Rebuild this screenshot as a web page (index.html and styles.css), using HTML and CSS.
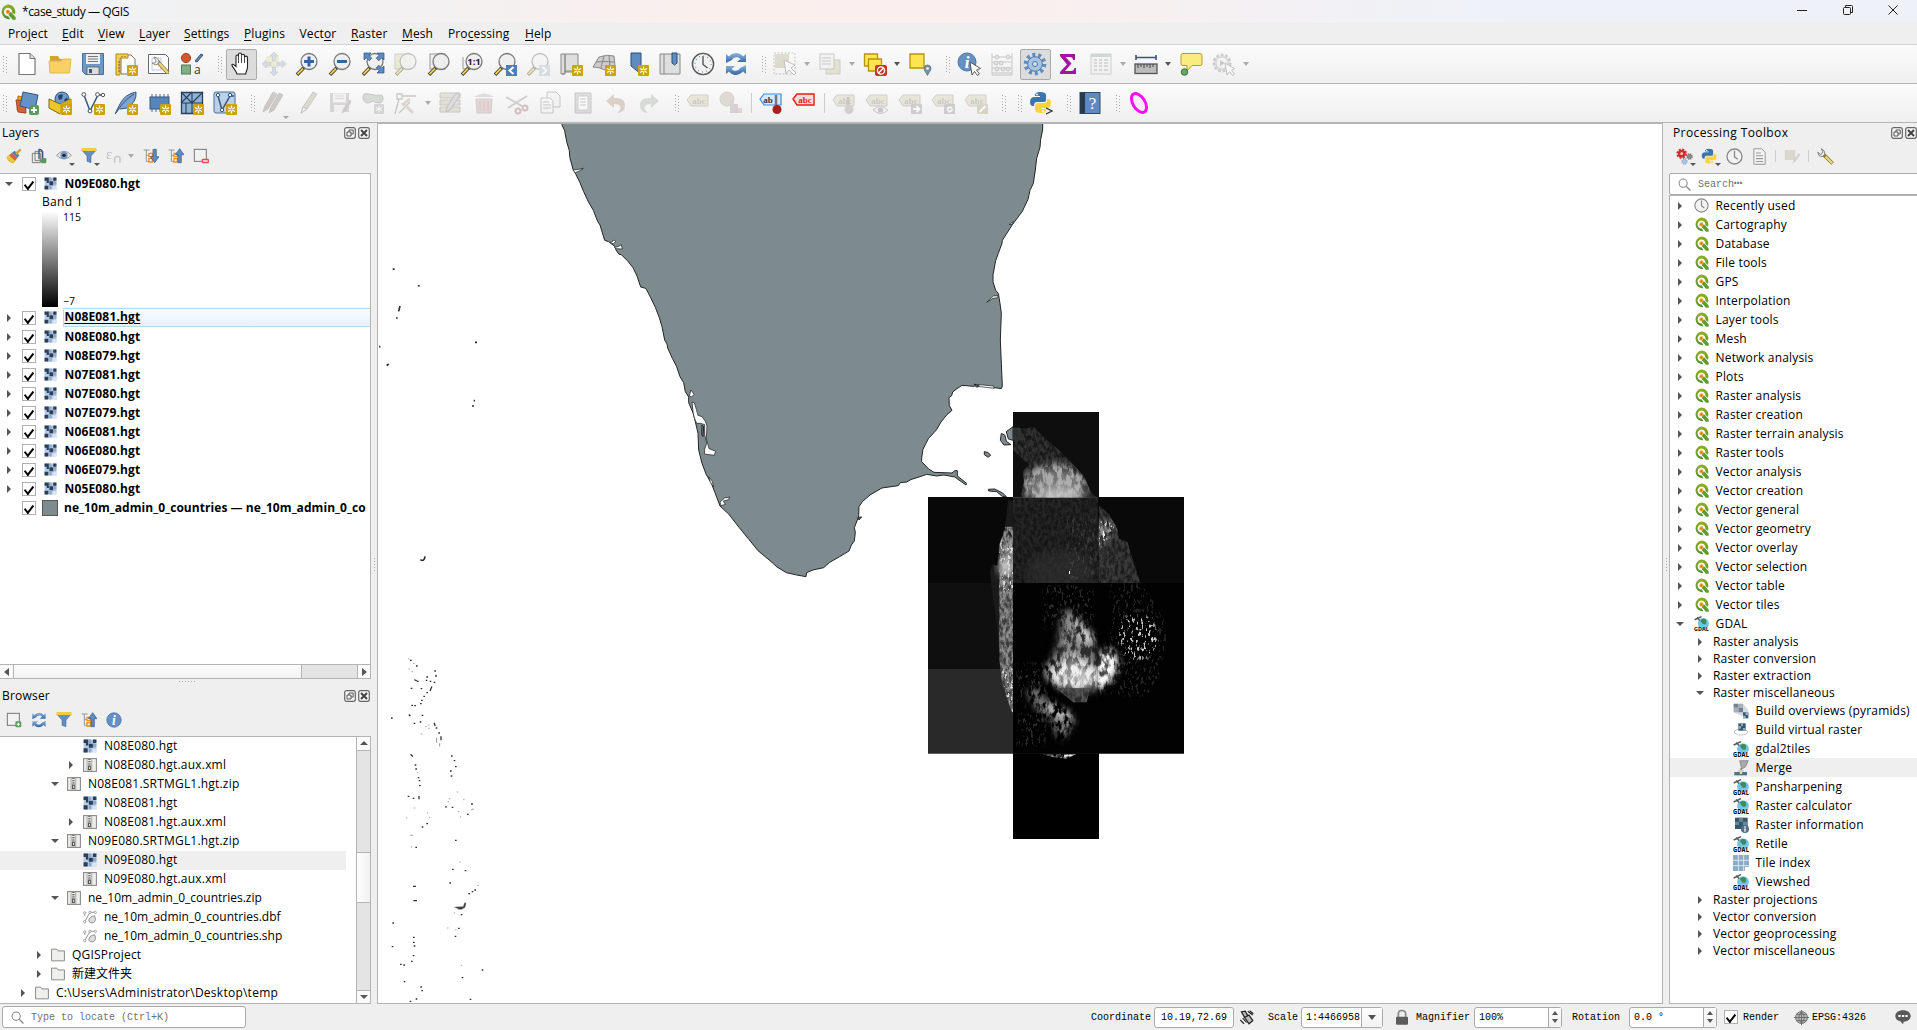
FILE: index.html
```
<!DOCTYPE html>
<html lang="en">
<head>
<meta charset="utf-8">
<title>*case_study — QGIS</title>
<link rel="stylesheet" href="styles.css">
</head>
<body>
<svg class="defs" aria-hidden="true">
<defs>
<linearGradient id="gq" x1="0" y1="0" x2="0" y2="1"><stop offset="0" stop-color="#93b023"/><stop offset="1" stop-color="#4f8f2c"/></linearGradient>
<linearGradient id="gb" x1="0" y1="0" x2="0" y2="1"><stop offset="0" stop-color="#8fb4dc"/><stop offset="1" stop-color="#33659f"/></linearGradient>
<symbol id="star" viewBox="0 0 24 24"><rect x="13" y="13" width="11" height="11" rx="1" fill="#c9a20c"/><path d="M18.500 14.500v8M15 16.500l7 4M22 16.500l-7 4" stroke="#fff" stroke-width="1.300"/><circle cx="18.500" cy="18.500" r="1.100" fill="#c9a20c"/></symbol>
<symbol id="plus" viewBox="0 0 24 24"><rect x="14" y="14" width="10" height="10" rx="2" fill="#5a9a5a"/><path d="M19 16v6M16 19h6" stroke="#fff" stroke-width="1.800"/></symbol>
<symbol id="mag" viewBox="0 0 24 24"><path d="M9 15.500L2 22.800" stroke="#333" stroke-width="3.400"/><path d="M8 16.500L2.500 22.200" stroke="#f3cf4d" stroke-width="1.900"/><circle cx="14" cy="9.500" r="8" fill="#eee" fill-opacity=".88" stroke="#777" stroke-width="1.300"/></symbol>
<symbol id="qgis" viewBox="0 0 24 24"><path d="M12 .8A11 11 0 1 0 15 22.600L12.500 18.300A6.300 6.300 0 1 1 18.300 12.700L22.300 15.500A11 11 0 0 0 12 .8Z" fill="url(#gq)"/><path d="M13 12.500h4l6.500 7.500v3.500H19l-6-7z" fill="#5f9d30"/><circle cx="11.800" cy="11.800" r="3.300" fill="#f2a33a"/><circle cx="11.800" cy="11.800" r="1.600" fill="#e8632b"/></symbol>
<symbol id="new" viewBox="0 0 24 24"><path d="M4 1.500h11l5 5v16H4z" fill="#fff" stroke="#777" stroke-width="1.200"/><path d="M15 1.500v5h5" fill="#ddd" stroke="#777"/></symbol>
<symbol id="open" viewBox="0 0 24 24"><path d="M2 4h8l2 3h10v4H2z" fill="#d3a62c"/><path d="M1 9h12l2-2h8l-1.500 14H2z" fill="#f8d064" stroke="#dcb03a" stroke-width=".8"/></symbol>
<symbol id="save" viewBox="0 0 24 24"><path d="M1.500 1.500h21v21h-18l-3-3z" fill="#6d97c4" stroke="#4a6f9b"/><rect x="5" y="2" width="14" height="10" fill="#eee"/><path d="M7 4.500h10M7 7h10M7 9.500h10" stroke="#777"/><path d="M6 15h12v7.500H6z" fill="#ddd" stroke="#555" stroke-width=".7"/><path d="M8 17h3v4H8z" fill="#37587e"/></symbol>
<symbol id="layout" viewBox="0 0 24 24"><path d="M7 3h10l4 4v15H7z" fill="#fff" stroke="#777"/><path d="M2 2h12v4H6v17H2z" fill="#f5cf4f" stroke="#ab8a19"/><path d="M4 10h2M4 13h2M4 16h2M4 19h2M8 4v1M11 4v1" stroke="#806400"/><use href="#star"/></symbol>
<symbol id="layman" viewBox="0 0 24 24"><path d="M1.500 2.500h17l3 3v16h-20z" fill="#fff" stroke="#666"/><path d="M5 6h9v12H5z" fill="none" stroke="#9ab3dd" stroke-width=".7"/><path d="M10 9l11 12" stroke="#8b7523" stroke-width="4"/><path d="M12 11l9 10" stroke="#efd980" stroke-width="2.400"/><path d="M7 5l3 1 2 3-1 3-3 1-3-2 3 0 1-2z" fill="#eee" stroke="#777" stroke-width=".8"/></symbol>
<symbol id="style" viewBox="0 0 24 24"><circle cx="6" cy="6" r="4.600" fill="#cd5834" stroke="#a3401f"/><path d="M15 9l6-7 2 1-6 7z" fill="#5c86b5" stroke="#34567f"/><rect x="1.500" y="13" width="9" height="9" fill="#83ad83" stroke="#527f52"/><text x="14" y="22" font-family="Open Sans" font-size="12" fill="#333">a</text></symbol>
<symbol id="hand" viewBox="0 0 24 24"><path d="M8 22C7 18 2 14 3 12.500c1.500-1 3 1 4 2V4.500c0-2 2.500-2 2.500 0V2.500c0-2 3-2 3 0v1.200c0-2 3-2 3 0v1.800c0-1.800 3-1.800 3 0V15c0 3-1.500 4-1.800 7z" fill="#fff" stroke="#222" stroke-width="1.100"/><path d="M9.500 4v7M12.500 4v7M15.500 5v6" stroke="#333" stroke-width=".9"/></symbol>
<symbol id="pansel" viewBox="0 0 24 24"><rect x="4" y="4" width="13" height="12" fill="#e4dc9f"/><path d="M12 0l4 4h-2.500v5H10.500V4H8zM12 24l4-4h-2.500v-5h-3v5H8zM0 12l4-4v2.500h5v3H4V16zM24 12l-4-4v2.500h-5v3h5V16z" fill="#aebccb" stroke="#8393a8" stroke-width=".7"/></symbol>
<symbol id="zin" viewBox="0 0 24 24"><use href="#mag"/><path d="M14 4.500v10M9 9.500h10" stroke="#33659f" stroke-width="3"/></symbol>
<symbol id="zout" viewBox="0 0 24 24"><use href="#mag"/><path d="M9 9.500h10" stroke="#33659f" stroke-width="3"/></symbol>
<symbol id="zfull" viewBox="0 0 24 24"><use href="#mag"/><path d="M3 1h7L7.800 3.200l3 3-2.600 2.600-3-3L3 8zM23 1h-7l2.200 2.200-3 3 2.600 2.600 3-3L23 8zM23 21h-7l2.200-2.200-3-3 2.600-2.600 3 3L23 14z" fill="#5d8dc0" stroke="#2b5077" stroke-width=".7"/></symbol>
<symbol id="zsel" viewBox="0 0 24 24"><rect x="1" y="2" width="15" height="15" fill="#ddd9a4" stroke="#999"/><use href="#mag"/></symbol>
<symbol id="zlay" viewBox="0 0 24 24"><rect x="3" y="2" width="15" height="15" fill="#eee" stroke="#999"/><use href="#mag"/></symbol>
<symbol id="znat" viewBox="0 0 24 24"><path d="M3 5v12h8" fill="none" stroke="#999"/><use href="#mag"/><text x="14" y="13.200" text-anchor="middle" font-family="Open Sans" font-weight="700" font-size="9.500" fill="#222">1:1</text></symbol>
<symbol id="zlast" viewBox="0 0 24 24"><use href="#mag"/><rect x="13" y="13" width="11" height="11" fill="#4d7eb4"/><path d="M20.500 15l-4 3.500 4 3.500" fill="none" stroke="#fff" stroke-width="2"/></symbol>
<symbol id="znext" viewBox="0 0 24 24"><use href="#mag"/><rect x="13" y="13" width="11" height="11" fill="#b5bcc5"/><path d="M16.500 15l4 3.500-4 3.500" fill="none" stroke="#fff" stroke-width="2"/></symbol>
<symbol id="nmap" viewBox="0 0 24 24"><path d="M2 2h4v20H2zM6 2h13v18H6z" fill="#dedede" stroke="#888"/><path d="M3 22c4 0 3-3 3-3h12" fill="none" stroke="#888"/><use href="#star"/></symbol>
<symbol id="n3d" viewBox="0 0 24 24"><path d="M1 15L7 5q8-3 15-1l1 10q-6 1-10 4-6-3-12-3z" fill="#ccc" stroke="#888"/><path d="M4 10q9-1 18 0M12 4l-3 12M17 3l1 12" fill="none" stroke="#888"/><use href="#star"/></symbol>
<symbol id="nbm" viewBox="0 0 24 24"><path d="M6 1h10v21l-5-4-5-4z" fill="#5d8dc0" stroke="#2b5077"/><use href="#star"/></symbol>
<symbol id="bm" viewBox="0 0 24 24"><path d="M2 2h20v20H2z" fill="#dedede" stroke="#888"/><path d="M6 2v20" stroke="#888"/><path d="M14 1h5v10l-2.500 2L14 11z" fill="#5d8dc0" stroke="#2b5077"/></symbol>
<symbol id="clock" viewBox="0 0 24 24"><circle cx="12" cy="12" r="10.600" fill="#f2f2f2" stroke="#555" stroke-width="1.400"/><path d="M12 4v8.500l4.500 3.500" fill="none" stroke="#555" stroke-width="1.400"/><circle cx="12" cy="12" r="8" fill="none" stroke="#7fa3cd" stroke-width="1.500" stroke-dasharray="1 3.190"/></symbol>
<symbol id="clocks" viewBox="0 0 24 24"><circle cx="12" cy="12" r="10.600" fill="#f2f2f2" stroke="#888" stroke-width="1.800"/><path d="M12 4v8.500l4.500 3.500" fill="none" stroke="#888" stroke-width="1.800"/></symbol>
<symbol id="refresh" viewBox="0 0 24 24"><path d="M2 11V2l3 2.500c5-5 11-4 14 0L22 2v8h-9l3.500-3C14 4 9 5 8 8z" fill="url(#gb)"/><path d="M22 13v9l-3-2.500c-5 5-11 4-14 0L2 22v-8h9l-3.500 3C10 20 15 19 16 16z" fill="url(#gb)"/></symbol>
<symbol id="selrect" viewBox="0 0 24 24"><rect x="1" y="1" width="21" height="21" fill="none" stroke="#888" stroke-dasharray="2 1.500"/><rect x="2" y="2" width="14" height="14" fill="#bbb794"/><path d="M11 8l2 14 3-4 5 5 2-2-5-5 4-3z" fill="#fff" stroke="#777"/></symbol>
<symbol id="selval" viewBox="0 0 24 24"><rect x="8" y="8" width="14" height="14" fill="#cfca9a" stroke="#999"/><rect x="2" y="2" width="14" height="15" fill="#eee" stroke="#888"/><path d="M4 6h9M4 9h9M4 12h9" stroke="#888"/></symbol>
<symbol id="desel" viewBox="0 0 24 24"><path d="M1.500 2h13v12h-13z" fill="#fde54f" stroke="#b6930c" stroke-width="1.300"/><path d="M5.500 7h13v12h-13z" fill="#fde54f" stroke="#b6930c" stroke-width="1.300"/><rect x="12" y="13" width="12" height="11" rx="2" fill="#d22d2d"/><circle cx="18" cy="18.500" r="3.600" fill="none" stroke="#fff" stroke-width="1.400"/><path d="M15.500 21l5-5" stroke="#fff" stroke-width="1.400"/></symbol>
<symbol id="selloc" viewBox="0 0 24 24"><path d="M2 2h14v14H2z" fill="#fde54f" stroke="#b6930c" stroke-width="1.300"/><path d="M19.500 23.500c-2-4-3.500-5-3.500-7a3.500 3.500 0 0 1 7 0c0 2-1.500 3-3.500 7z" fill="#7a919e" stroke="#56707f" stroke-width=".7"/><circle cx="19.500" cy="16.500" r="1.300" fill="#fff"/></symbol>
<symbol id="info" viewBox="0 0 24 24"><circle cx="10" cy="10" r="9" fill="#6490c4" stroke="#4a76ac"/><text x="10" y="16" text-anchor="middle" font-family="Liberation Serif" font-style="italic" font-weight="700" font-size="17" fill="#fff">i</text></symbol>
<symbol id="ident" viewBox="0 0 24 24"><use href="#info"/><path d="M13 10l2 13 2.500-3.500 3 4 2-1.500-3-4 4-1.500z" fill="#fff" stroke="#555"/></symbol>
<symbol id="abacus" viewBox="0 0 24 24"><path d="M2 1v22h20V1M2 5h20M2 10h20M2 16h20M2 21h20" fill="none" stroke="#888"/><g fill="#ccc" stroke="#888"><circle cx="7" cy="5" r="2"/><circle cx="18" cy="5" r="2"/><circle cx="6" cy="11" r="2"/><circle cx="11" cy="11" r="2"/><circle cx="7" cy="17" r="2"/><circle cx="13" cy="17" r="2"/><circle cx="18" cy="17" r="2"/></g></symbol>
<symbol id="gear" viewBox="0 0 24 24"><circle cx="12" cy="12" r="9.300" fill="none" stroke="#5d8dc0" stroke-width="4" stroke-dasharray="3 2.843"/><circle cx="12" cy="12" r="7.300" fill="#a9c3e2" stroke="#4a78ad"/><circle cx="12" cy="12" r="2.500" fill="#ddd" stroke="#4a78ad"/></symbol>
<symbol id="sigma" viewBox="0 0 24 24"><path d="M4 2h15v6h-2q0-3-3-3H9.500l6 6.500L9 19h6q3 0 3.500-3H20v6H4v-2l7-7.500L4 4z" fill="#a5129f"/></symbol>
<symbol id="table" viewBox="0 0 24 24"><path d="M2 2h20v20H2z" fill="#eee" stroke="#999"/><path d="M2 3.500h20" stroke="#9aa" stroke-width="3"/><path d="M5 8h3M10 8h3M15 8h4M5 11h3M10 11h3M15 11h4M5 14h3M10 14h3M15 14h4M5 18h3M10 18h3M15 18h4" stroke="#999" stroke-width="1.500"/></symbol>
<symbol id="measure" viewBox="0 0 24 24"><path d="M2 5.500h20M2 3v5M22 3v5" stroke="#34567f" stroke-width="1.600"/><rect x="1" y="12" width="22" height="9.500" fill="#bbb" stroke="#555" stroke-width="1.300"/><path d="M4 12v4M7 12v3M10 12v4M13 12v3M16 12v4M19 12v3" stroke="#444"/></symbol>
<symbol id="tip" viewBox="0 0 24 24"><path d="M4 1.500h17q2 0 2 2v8q0 2-2 2h-8L8 19v-5.500H4q-2 0-2-2v-8q0-2 2-2z" fill="#fbec80" stroke="#b69b21"/><circle cx="5.500" cy="20" r="3.300" fill="#69a365" stroke="#3b7440"/></symbol>
<symbol id="action" viewBox="0 0 24 24"><circle cx="10" cy="11" r="8" fill="#ddd" stroke="#999" stroke-width="3" stroke-dasharray="3 1.500"/><circle cx="10" cy="11" r="6" fill="#eee" stroke="#999"/><path d="M8 8l5 3-5 3z" fill="#888"/><path d="M13 11l2 12 2.500-3.500 3 4 2-1.500-3-4 3-1.500z" fill="#fff" stroke="#777"/></symbol>
<symbol id="dsm" viewBox="0 0 24 24"><path d="M3 5l9 2-2 15-8-3z" fill="#e9a227" stroke="#b3751a"/><path d="M1 9l9 1 1 12-8-1z" fill="#d26635" stroke="#a04320"/><path d="M8 1l15 3-3 15-15-4z" fill="#6592c4" stroke="#34567f"/><use href="#plus"/></symbol>
<symbol id="ngpkg" viewBox="0 0 24 24"><circle cx="14" cy="8" r="7" fill="#6f9bcb" stroke="#2b5077"/><path d="M10 5q3-3 5-1l-1 4-3 1zM16 9l3-3 1 4-2 3z" fill="#24466e"/><path d="M1 8l11 5 11-5v9l-11 6-11-6z" fill="#ecc62d" stroke="#7d6710"/><path d="M12 13v10l11-6V8z" fill="#d7ad12"/><use href="#star"/></symbol>
<symbol id="nshp" viewBox="0 0 24 24"><path d="M3 4l6 16L17 4h4" fill="none" stroke="#34567f" stroke-width="1.500"/><g fill="#fff" stroke="#555"><circle cx="2.800" cy="3.500" r="1.900"/><circle cx="9" cy="20" r="1.900"/><circle cx="16.500" cy="3.500" r="1.900"/><circle cx="22" cy="4" r="1.700"/></g><use href="#star"/></symbol>
<symbol id="nspl" viewBox="0 0 24 24"><path d="M1 23L6 13Q11 3 22 1q1 10-9 16l-7 1" fill="#7ea5d1" stroke="#34567f"/><path d="M2 22Q9 10 20 3" stroke="#34567f" fill="none"/><use href="#star"/></symbol>
<symbol id="nmem" viewBox="0 0 24 24"><path d="M5 3v18M9 3v18M13 3v18M17 3v18M21 3v18" stroke="#8a98a8" stroke-width="1.500"/><rect x="3" y="6" width="19" height="12" fill="#5586bb" stroke="#34567f"/><use href="#star"/></symbol>
<symbol id="nmesh" viewBox="0 0 24 24"><path d="M1.500 1.500h21v21h-21z" fill="#8eb1d6" stroke="#2b3f59" stroke-width="1.300"/><path d="M1 12h22M12 1v22M1 1l11 11M12 1L1 12M12 12l11-11M6 12v11" stroke="#2b3f59" stroke-width="1.100"/><use href="#star"/></symbol>
<symbol id="nvirt" viewBox="0 0 24 24"><rect x="1" y="1" width="21" height="21" rx="2" fill="#b9d0e8" stroke="#4a6f9b"/><path d="M5 5l4 14 8-14h4" fill="none" stroke="#34567f" stroke-width="1.500"/><g fill="#fff" stroke="#34567f"><circle cx="5" cy="4" r="1.700"/><circle cx="9" cy="19" r="1.700"/><circle cx="17" cy="4" r="1.700"/></g><use href="#star"/></symbol>
<symbol id="pencil" viewBox="0 0 24 24"><path d="M6 22l2-6L18 1l4 2-10 15z" fill="#b9b495" stroke="#888"/><path d="M6 22l2-6 4 2z" fill="#eee" stroke="#888"/></symbol>
<symbol id="pencils" viewBox="0 0 24 24"><g fill="#9e8a80" stroke="#888"><path d="M1 21l2-6L11 1l4 2-9 15z"/><path d="M7 22l2-6L17 2l4 2-9 15z"/></g></symbol>
<symbol id="editsave" viewBox="0 0 24 24"><path d="M2 2h19v19H2z" fill="#aaa"/><path d="M5 2.500h13v9H5zM6 14h11v7H6z" fill="#eee"/><path d="M7 5h9M7 7.500h9" stroke="#aaa"/><path d="M14 22l2-5 6-8 1 2-6 9z" fill="#a88" stroke="#999"/></symbol>
<symbol id="addf" viewBox="0 0 24 24"><path d="M2 8Q1 1 8 3t13 1q3 6-2 8-5 0-7-2-7 5-10-2z" fill="#abb5a6" stroke="#888"/><rect x="13" y="13" width="10" height="10" rx="1" fill="#aaa"/><path d="M18 14.500v7M15 16.500l6 3M21 16.500l-6 3" stroke="#fff"/></symbol>
<symbol id="vertex" viewBox="0 0 24 24"><path d="M3 3h5v5H3zM8 5h14M5 8L1 23M5 22l11-11" fill="none" stroke="#888" stroke-width="1.300"/><path d="M10 13l9 9M8 14l8-6" stroke="#b9b495" stroke-width="3"/></symbol>
<symbol id="multi" viewBox="0 0 24 24"><path d="M1 2h20v5H1zM1 9h20v5H1zM1 16h20v5H1z" fill="#c9c5a4" stroke="#888"/><path d="M7 21l1-5L17 2l4 2-9 14z" fill="#bbb" stroke="#777"/></symbol>
<symbol id="trash" viewBox="0 0 24 24"><path d="M4 8h16l-1 14H5z" fill="#d6a9a9" stroke="#999"/><path d="M2 6q10-7 20 0z" fill="#bbb"/><path d="M8 10v10M12 10v10M16 10v10" stroke="#a88"/></symbol>
<symbol id="cut" viewBox="0 0 24 24"><path d="M1 6l16 9M3 17L22 5" stroke="#999" stroke-width="2"/><circle cx="20" cy="17" r="2.500" fill="none" stroke="#a77" stroke-width="2"/><circle cx="13" cy="20" r="2.500" fill="none" stroke="#a77" stroke-width="2"/></symbol>
<symbol id="copy" viewBox="0 0 24 24"><path d="M9 1h9l4 4v11H9z" fill="#eee" stroke="#888"/><path d="M3 7h9l3 3v12H3z" fill="#f4f4f4" stroke="#888"/><path d="M5 11h6M5 14h8M5 17h8" stroke="#888"/></symbol>
<symbol id="paste" viewBox="0 0 24 24"><path d="M4 2h16v20H4z" fill="#bbb" stroke="#888"/><path d="M7 5h10v14H7z" fill="#fff" stroke="#999"/><path d="M9 8h6M9 11h6M9 14h6" stroke="#888"/></symbol>
<symbol id="undo" viewBox="0 0 24 24"><path d="M2 10l8-7v4q11-1 11 7t-8 8q5-4 3-7-1-2-6-2v4z" fill="#b99c8e"/></symbol>
<symbol id="redo" viewBox="0 0 24 24"><path d="M22 10l-8-7v4q-11-1-11 7t8 8q-5-4-3-7 1-2 6-2v4z" fill="#b0b6b0"/></symbol>
<symbol id="lab" viewBox="0 0 24 24"><path d="M1 9l4-5h17v11H5z" fill="#d4cfae" stroke="#999"/><text x="13" y="13" text-anchor="middle" font-family="Liberation Serif" font-weight="700" font-size="9" fill="#888">abc</text></symbol>
<symbol id="labblue" viewBox="0 0 24 24"><path d="M1 8l4-5h17v11H5z" fill="#d7e9fb" stroke="#3f8ede" stroke-width="1.200"/><text x="9" y="12" text-anchor="middle" font-family="Liberation Serif" font-weight="700" font-size="9" fill="#333">ab</text><path d="M17 4v11" stroke="#777" stroke-width="2.500"/><circle cx="18" cy="18.500" r="4.500" fill="#a81f22"/></symbol>
<symbol id="labred" viewBox="0 0 24 24"><path d="M1 8l4-5h17v11H5z" fill="#fbdcdc" stroke="#f41414" stroke-width="1.400"/><text x="13" y="12" text-anchor="middle" font-family="Liberation Serif" font-weight="700" font-size="9" fill="#f41414">abc</text></symbol>
<symbol id="diag" viewBox="0 0 24 24"><circle cx="8" cy="8" r="7" fill="#bbb8a0" stroke="#999"/><path d="M8 8V1a7 7 0 0 1 6 10z" fill="#c7a9a9"/><path d="M11 9h4v13h-4z" fill="#aaa"/><path d="M15 13h4v9h-4z" fill="#b9a"/><path d="M19 17h4v5h-4z" fill="#bbb79a"/></symbol>
<symbol id="lpin" viewBox="0 0 24 24"><use href="#lab"/><path d="M16 6v9" stroke="#888" stroke-width="3"/><circle cx="17" cy="18.500" r="4.500" fill="#a99"/></symbol>
<symbol id="leye" viewBox="0 0 24 24"><use href="#lab"/><path d="M8 19q7-7 15 0-7 7-15 0z" fill="#eee" stroke="#888"/><circle cx="15.500" cy="19" r="2.600" fill="#888"/></symbol>
<symbol id="lmove" viewBox="0 0 24 24"><use href="#lab"/><rect x="13" y="13" width="11" height="10" rx="1" fill="#999"/><path d="M15 18h6M18.500 15l3 3-3 3" fill="none" stroke="#fff" stroke-width="1.800"/></symbol>
<symbol id="lrot" viewBox="0 0 24 24"><use href="#lab"/><rect x="13" y="13" width="11" height="10" rx="1" fill="#999"/><path d="M17 21q5-1 4-3-1-3-4-1v3" fill="none" stroke="#fff" stroke-width="1.600"/></symbol>
<symbol id="ledit" viewBox="0 0 24 24"><use href="#lab"/><rect x="13" y="13" width="11" height="10" rx="1" fill="#b0aa88"/><path d="M15.500 21l6-6" stroke="#fff" stroke-width="2"/></symbol>
<symbol id="py" viewBox="0 0 24 24"><path d="M11 1q6 0 6 3v5q0 2-2 2H8q-3 0-3 4H4Q1 15 1 11q0-5 5-5h5V5H6V4q0-3 5-3z" fill="#3a76ac"/><circle cx="8" cy="3.500" r="1" fill="#fff"/><path d="M12 22q-6 0-6-3v-4q0-3 3-3h6q3 0 3-4h1q3 0 3 4 0 5-4 5h-6v1h5v1q0 3-5 3z" fill="#fcd241"/><circle cx="14" cy="20" r="1" fill="#fff"/></symbol>
<symbol id="pycon" viewBox="0 0 24 24"><use href="#py"/><path d="M17 17l6 3-6 3" fill="none" stroke="#333" stroke-width="1.300"/></symbol>
<symbol id="help" viewBox="0 0 24 24"><rect x="2" y="1.500" width="20" height="21" fill="#5d8bc0" stroke="#34495e"/><rect x="2" y="1.500" width="5" height="21" fill="#2a3b4e"/><text x="14.500" y="18" text-anchor="middle" font-family="Liberation Serif" font-size="17" fill="#fff">?</text></symbol>
<symbol id="ring" viewBox="0 0 24 24"><ellipse cx="12" cy="12" rx="6" ry="10.500" transform="rotate(-32 12 12)" fill="#f6eef6" stroke="#fb0ffb" stroke-width="3"/></symbol>
<symbol id="raster" viewBox="0 0 24 24"><path d="M1 1h22v22H1z" fill="#b5cbe6"/><path d="M1 1h8v6H1zM17 1h6v6h-6zM10 8h7v7h-7zM1 16h7v7H1zM5 7h4v4H5z" fill="#2d3d55"/><path d="M9 1h5v6H9zM17 8h6v6h-6zM10 16h4v7h-4z" fill="#8ea8ca"/><path d="M16 17h7v6h-7z" fill="#dbe6f4"/></symbol>
<symbol id="zip" viewBox="0 0 24 24"><rect x="1" y="1" width="22" height="22" fill="#ededea" stroke="#888" stroke-width="1.800"/><path d="M7 2v20M15 2v20" stroke="#777"/><path d="M11 2v12" stroke="#444" stroke-width="4" stroke-dasharray="1.500 1.500"/><path d="M8.500 13h5v8h-5z" fill="#555"/><path d="M10.500 15h1.500v4h-1.500z" fill="#eee"/></symbol>
<symbol id="folder" viewBox="0 0 24 24"><path d="M1 2h9l2 3h11v17H1z" fill="#efefee" stroke="#8a8a8a" stroke-width="1.700"/></symbol>
<symbol id="vec" viewBox="0 0 24 24"><path d="M3 20L12 4h9M3 7v3" stroke="#888" stroke-width="1.500" fill="none"/><path d="M10 19q0-8 10-9 4 9-3 12-6 1-7-3z" fill="#ddd" stroke="#888" stroke-width="1.500"/><g fill="#fff" stroke="#888" stroke-width="1.200"><circle cx="3" cy="5" r="2"/><circle cx="3" cy="20" r="2"/><circle cx="12" cy="4" r="2"/><circle cx="21" cy="4" r="2"/></g></symbol>
<symbol id="gdal" viewBox="0 0 24 24"><circle cx="15" cy="12" r="8.800" fill="#6fc4e8"/><path d="M11 6q5-3 8 0 2 5-1 7-4 1-5-2-3-1-2-5z" fill="#3f8a57"/><path d="M1 6L12 1M5 2l4 5" stroke="#555" stroke-width="2.200"/><text x="0" y="23.500" font-family="Open Sans" font-weight="700" font-size="9.500" textLength="24" lengthAdjust="spacingAndGlyphs" fill="#000" stroke="#fff" stroke-width=".4" paint-order="stroke">GDAL</text></symbol>
<symbol id="pyr" viewBox="0 0 24 24"><path d="M1 1h14l8 9v9H12L1 14z" fill="#d7dbe0"/><path d="M1 1h7v6H1zM8 7h7v7H8z" fill="#748293"/><path d="M8 1h7v6H8zM1 7h7v7H1z" fill="#a4afbb"/><path d="M15 14h8v9h-8z" fill="#34566e"/><path d="M19 14h4v4h-4zM15 19h4v4h-4z" fill="#9fb4c4"/></symbol>
<symbol id="vrt" viewBox="0 0 24 24"><ellipse cx="12" cy="15" rx="10" ry="4.500" fill="#fff" stroke="#bbb" stroke-width="1.300"/><path d="M8 2h11v11H8z" fill="#34566e"/><path d="M12 2h3v4h-3zM8 6h4v4H8zM15 9h4v4h-4z" fill="#91a9bb"/></symbol>
<symbol id="merge" viewBox="0 0 24 24"><path d="M10 1h13l-4 9-6 4-1-5z" fill="#aaa" stroke="#777"/><path d="M12 12v6" stroke="#777" stroke-width="1.800"/><path d="M8 15h8v3H8z" fill="#ccc"/><rect x="2" y="18" width="19" height="5" fill="#4d7186"/><circle cx="12" cy="19" r="2" fill="#f3e26d"/></symbol>
<symbol id="rinfo" viewBox="0 0 24 24"><path d="M3 1h19v17H3z" fill="#34566e"/><path d="M9 1h6v6H9zM3 7h6v5H3zM15 7h7v5h-7z" fill="#6c8799"/><circle cx="18" cy="18" r="6" fill="#4f7189"/><path d="M18 14v2M18 17v5" stroke="#fff" stroke-width="2"/></symbol>
<symbol id="tidx" viewBox="0 0 24 24"><path d="M0 0h24v18h-6v6H0z" fill="#8dabc4"/><path d="M8 0v24M16 0v24M0 8h24M0 16h24" stroke="#e7eff6" stroke-width="1.300"/></symbol>
<symbol id="lstyle" viewBox="0 0 24 24"><path d="M1 14l8-7 8 8-6 8q-7-1-10-9z" fill="#d5604a"/><path d="M1 14l4-3 9 9-3 3q-7-1-10-9z" fill="#e7cb36"/><path d="M9 7l4-3 7 7-3 4z" fill="#4d7eb4"/><path d="M15 9l7-7" stroke="#d6a437" stroke-width="4"/></symbol>
<symbol id="lgroup" viewBox="0 0 24 24"><path d="M2 8h12v14H2zM6 5h12v14H6z" fill="#eee" stroke="#777" stroke-width="1.400"/><path d="M12 17V2q5 0 5 5v9" fill="none" stroke="#34567f" stroke-width="2"/><rect x="15" y="15" width="8" height="8" rx="2" fill="#5a9a5a"/></symbol>
<symbol id="eye" viewBox="0 0 24 24"><path d="M1 11q11-12 22 0-11 11-22 0z" fill="#eee" stroke="#888" stroke-width="1.300"/><circle cx="12" cy="11" r="5.500" fill="#7097c4"/><circle cx="12" cy="11" r="2.500" fill="#222"/></symbol>
<symbol id="filter" viewBox="0 0 24 24"><path d="M1 3h22l-8 9v10l-6-2v-8z" fill="#6390c2" stroke="#34567f" stroke-width=".7"/><rect x="1" y="0" width="22" height="4.500" fill="#e8d33a"/></symbol>
<symbol id="expr" viewBox="0 0 24 24"><text x="0" y="16" font-family="Liberation Serif" font-size="22" fill="#777">ε</text><path d="M13 22v-7q5-5 8 0v7" fill="none" stroke="#999" stroke-width="2.500"/></symbol>
<symbol id="expand" viewBox="0 0 24 24"><path d="M1 3h9M5 3v17h5M5 11h5" fill="none" stroke="#888" stroke-width="1.300"/><path d="M9 8h5v5H9zM9 16h5v5H9z" fill="#fff" stroke="#ef8e1c" stroke-width="2"/><path d="M15 2h5v11h4l-6.500 9L11 13h4z" fill="#5d8dc0" stroke="#34567f"/></symbol>
<symbol id="collapse" viewBox="0 0 24 24"><path d="M1 3h9M5 3v17h5M5 11h5" fill="none" stroke="#888" stroke-width="1.300"/><path d="M9 8h5v5H9zM9 16h5v5H9z" fill="#fff" stroke="#ef8e1c" stroke-width="2"/><path d="M15 22h5V10h4L17.500 1 11 10h4z" fill="#5d8dc0" stroke="#34567f"/></symbol>
<symbol id="remove" viewBox="0 0 24 24"><rect x="2" y="2" width="18" height="18" fill="#f2f2f0" stroke="#777" stroke-width="1.500"/><rect x="13" y="16" width="11" height="7" rx="2" fill="#e44b55"/><path d="M15 19.500h7" stroke="#fff" stroke-width="2"/></symbol>
<symbol id="addl" viewBox="0 0 24 24"><rect x="2" y="2" width="18" height="18" fill="#f2f2f0" stroke="#777" stroke-width="1.500"/><rect x="14" y="14" width="9" height="9" rx="2" fill="#5a9a5a"/><path d="M18.500 16v5M16 18.500h5" stroke="#fff" stroke-width="1.600"/></symbol>
<symbol id="models" viewBox="0 0 24 24"><circle cx="8" cy="8" r="5.500" fill="#c9302c" stroke="#c9302c" stroke-width="4" stroke-dasharray="2.500 1.820"/><circle cx="8" cy="8" r="2" fill="#f0d0d0"/><circle cx="19" cy="12" r="3.500" fill="#888" stroke="#777" stroke-width="2.500" stroke-dasharray="1.500 1.250"/><circle cx="12" cy="19" r="3.500" fill="#a9c3e2" stroke="#8fb0d8" stroke-width="2.500" stroke-dasharray="1.500 1.250"/></symbol>
<symbol id="doc" viewBox="0 0 24 24"><path d="M4 1h11l5 5v17H4z" fill="#f2f2f2" stroke="#999" stroke-width="1.400"/><path d="M7 7h7M7 11h10M7 15h10M7 19h10" stroke="#999" stroke-width="1.600"/></symbol>
<symbol id="editp" viewBox="0 0 24 24"><path d="M1 3h15v14H1z" fill="#bbb59a"/><path d="M12 22l2-6 7-9 2 2-7 10z" fill="#aaa"/></symbol>
<symbol id="wrench" viewBox="0 0 24 24"><path d="M9 9l13 13" stroke="#8b7523" stroke-width="5"/><path d="M12 12l9.500 9.500" stroke="#efd980" stroke-width="3"/><path d="M6 1l4 3 1 5-3 3-5-1-2-5 4 3 2-1 1-3z" fill="#eee" stroke="#777" stroke-width="1.300"/></symbol>
<symbol id="search" viewBox="0 0 24 24"><circle cx="9.500" cy="9.500" r="7.500" fill="none" stroke="#888" stroke-width="1.900"/><path d="M15 15l8 8" stroke="#888" stroke-width="2.500"/></symbol>
<symbol id="float" viewBox="0 0 12 12"><rect x=".7" y=".7" width="10.600" height="10.600" rx="2" fill="#f7f7f7" stroke="#666" stroke-width="1.200"/><path d="M5 5V3h4.200v4H7M3 5h4v4H3z" fill="none" stroke="#555"/></symbol>
<symbol id="close" viewBox="0 0 12 12"><rect x=".7" y=".7" width="10.600" height="10.600" rx="2" fill="#f7f7f7" stroke="#666" stroke-width="1.200"/><path d="M3 3l6 6M9 3l-6 6" stroke="#444" stroke-width="2"/></symbol>
<symbol id="extent" viewBox="0 0 24 24"><path d="M4 3l6-1 4 7-5 3zM9 12l7-4 6 9-6 5z" fill="#bbb" stroke="#222" stroke-width="2"/><path d="M2 16l6 6M6 13l6 7M14 2l8 6M17 1l6 5" stroke="#222" stroke-width="1.800"/></symbol>
<symbol id="lock" viewBox="0 0 24 24"><path d="M6.500 12V7q0-5.500 5.500-5.500T17.500 7v5" fill="none" stroke="#888" stroke-width="2.600"/><rect x="3" y="11" width="18" height="12" rx="1.500" fill="#5c5c5c"/></symbol>
<symbol id="globe" viewBox="0 0 24 24"><circle cx="12" cy="12" r="9.500" fill="#bbb" stroke="#666" stroke-width="1.500"/><path d="M0 12h24M12 0v24M4 7h16M4 17h16M12 3q-9 9 0 18M12 3q9 9 0 18" fill="none" stroke="#666" stroke-width="1.400"/></symbol>
<symbol id="msg" viewBox="0 0 24 24"><path d="M12 2c7 0 11.500 3.500 11.500 8.500S19 19 13 19l-1 4-4-4.500C3 17.500.5 14.500.5 10.500.5 5.500 5 2 12 2z" fill="#5a5a5a"/><path d="M5 10.500h3.500M10.300 10.500h3.500M15.500 10.500H19" stroke="#fff" stroke-width="3"/></symbol>
</defs>
</svg>

<div class="app">
<header class="title"><svg><use href="#qgis"/></svg><span>*case_study — QGIS</span>
<div class="win"><svg viewBox="0 0 12 12"><path d="M1 6.500h10"/></svg><svg viewBox="0 0 12 12"><rect x="1.500" y="3.500" width="7" height="7" rx="1"/><path d="M3.500 3.500v-2h6q1 0 1 1v6h-2"/></svg><svg viewBox="0 0 12 12"><path d="M1.500 1.500l9 9M10.500 1.500l-9 9"/></svg></div></header>
<nav class="menu"><span>Pro<u>j</u>ect</span><span><u>E</u>dit</span><span><u>V</u>iew</span><span><u>L</u>ayer</span><span><u>S</u>ettings</span><span><u>P</u>lugins</span><span>Vect<u>o</u>r</span><span><u>R</u>aster</span><span><u>M</u>esh</span><span>Pro<u>c</u>essing</span><span><u>H</u>elp</span></nav>

<div class="bar">
<i class="h first"></i><b><svg><use href="#new"/></svg></b><b><svg><use href="#open"/></svg></b><b><svg><use href="#save"/></svg></b><b><svg><use href="#layout"/></svg></b><b><svg><use href="#layman"/></svg></b><b><svg><use href="#style"/></svg></b>
<i class="h"></i><b class="on"><svg><use href="#hand"/></svg></b><b class="off"><svg><use href="#pansel"/></svg></b><b><svg><use href="#zin"/></svg></b><b><svg><use href="#zout"/></svg></b><b><svg><use href="#zfull"/></svg></b><b class="off"><svg><use href="#zsel"/></svg></b><b><svg><use href="#zlay"/></svg></b><b><svg><use href="#znat"/></svg></b><b><svg><use href="#zlast"/></svg></b><b class="off"><svg><use href="#znext"/></svg></b><b><svg><use href="#nmap"/></svg></b><b><svg><use href="#n3d"/></svg></b><b><svg><use href="#nbm"/></svg></b><b><svg><use href="#bm"/></svg></b><b><svg><use href="#clock"/></svg></b><b><svg><use href="#refresh"/></svg></b>
<i class="h"></i><b class="off"><svg><use href="#selrect"/></svg></b><em class="dd off"></em><b class="off"><svg><use href="#selval"/></svg></b><em class="dd off"></em><b><svg><use href="#desel"/></svg></b><em class="dd"></em><b><svg><use href="#selloc"/></svg></b>
<i class="h"></i><b><svg><use href="#ident"/></svg></b><b class="off"><svg><use href="#abacus"/></svg></b><b class="on"><svg><use href="#gear"/></svg></b><b><svg><use href="#sigma"/></svg></b><b class="off"><svg><use href="#table"/></svg></b><em class="dd off"></em><b><svg><use href="#measure"/></svg></b><em class="dd"></em><b><svg><use href="#tip"/></svg></b><b class="off"><svg><use href="#action"/></svg></b><em class="dd off"></em>
</div>
<div class="bar">
<i class="h first"></i><b><svg><use href="#dsm"/></svg></b><b><svg><use href="#ngpkg"/></svg></b><b><svg><use href="#nshp"/></svg></b><b><svg><use href="#nspl"/></svg></b><b><svg><use href="#nmem"/></svg></b><b><svg><use href="#nmesh"/></svg></b><b><svg><use href="#nvirt"/></svg></b>
<i class="h"></i><b class="off sub"><svg><use href="#pencils"/></svg></b><b class="off"><svg><use href="#pencil"/></svg></b><b class="off"><svg><use href="#editsave"/></svg></b><b class="off"><svg><use href="#addf"/></svg></b><b class="off"><svg><use href="#vertex"/></svg></b><em class="dd off"></em><b class="off"><svg><use href="#multi"/></svg></b><b class="off"><svg><use href="#trash"/></svg></b><b class="off"><svg><use href="#cut"/></svg></b><b class="off"><svg><use href="#copy"/></svg></b><b class="off"><svg><use href="#paste"/></svg></b><b class="off"><svg><use href="#undo"/></svg></b><b class="off"><svg><use href="#redo"/></svg></b>
<i class="h"></i><b class="off"><svg><use href="#lab"/></svg></b><b class="off"><svg><use href="#diag"/></svg></b><i class="sep"></i><b><svg><use href="#labblue"/></svg></b><b><svg><use href="#labred"/></svg></b><i class="sep"></i><b class="off"><svg><use href="#lpin"/></svg></b><b class="off"><svg><use href="#leye"/></svg></b><b class="off"><svg><use href="#lmove"/></svg></b><b class="off"><svg><use href="#lrot"/></svg></b><b class="off"><svg><use href="#ledit"/></svg></b>
<i class="h"></i><i class="h"></i><b><svg><use href="#pycon"/></svg></b><i class="h"></i><b><svg><use href="#help"/></svg></b><i class="h"></i><b><svg><use href="#ring"/></svg></b>
</div>

<main class="work">
<aside class="left">
<section class="layers">
<div class="ptitle"><span>Layers</span><svg><use href="#float"/></svg><svg><use href="#close"/></svg></div>
<div class="ptools"><b><svg><use href="#lstyle"/></svg></b><b><svg><use href="#lgroup"/></svg></b><b class="sub"><svg><use href="#eye"/></svg></b><b class="sub"><svg><use href="#filter"/></svg></b><b class="off"><svg><use href="#expr"/></svg></b><em class="dd off"></em><b><svg><use href="#expand"/></svg></b><b><svg><use href="#collapse"/></svg></b><b><svg><use href="#remove"/></svg></b></div>
<div class="tree ltree">
<div class="row"><i class="ar down"></i><i class="ck"></i><svg><use href="#raster"/></svg><strong>N09E080.hgt</strong></div>
<div class="legend"><span>Band 1</span><div class="ramp"><i></i><div><span>115</span><span>−7</span></div></div></div>
<div class="row"><i class="ar"></i><i class="ck"></i><svg><use href="#raster"/></svg><strong class="cur"><u>N08E081.hgt</u></strong></div>
<div class="row"><i class="ar"></i><i class="ck"></i><svg><use href="#raster"/></svg><strong>N08E080.hgt</strong></div>
<div class="row"><i class="ar"></i><i class="ck"></i><svg><use href="#raster"/></svg><strong>N08E079.hgt</strong></div>
<div class="row"><i class="ar"></i><i class="ck"></i><svg><use href="#raster"/></svg><strong>N07E081.hgt</strong></div>
<div class="row"><i class="ar"></i><i class="ck"></i><svg><use href="#raster"/></svg><strong>N07E080.hgt</strong></div>
<div class="row"><i class="ar"></i><i class="ck"></i><svg><use href="#raster"/></svg><strong>N07E079.hgt</strong></div>
<div class="row"><i class="ar"></i><i class="ck"></i><svg><use href="#raster"/></svg><strong>N06E081.hgt</strong></div>
<div class="row"><i class="ar"></i><i class="ck"></i><svg><use href="#raster"/></svg><strong>N06E080.hgt</strong></div>
<div class="row"><i class="ar"></i><i class="ck"></i><svg><use href="#raster"/></svg><strong>N06E079.hgt</strong></div>
<div class="row"><i class="ar"></i><i class="ck"></i><svg><use href="#raster"/></svg><strong>N05E080.hgt</strong></div>
<div class="row"><i class="ar none"></i><i class="ck"></i><i class="swatch"></i><strong>ne_10m_admin_0_countries — ne_10m_admin_0_co</strong></div>
</div>
<div class="hscroll"><i class="sb l"></i><i class="thumb"></i><i class="trough"></i><i class="sb r"></i></div>
</section>
<div class="hgrip"></div>
<section class="browser">
<div class="ptitle"><span>Browser</span><svg><use href="#float"/></svg><svg><use href="#close"/></svg></div>
<div class="ptools"><b><svg><use href="#addl"/></svg></b><b><svg><use href="#refresh"/></svg></b><b><svg><use href="#filter"/></svg></b><b><svg><use href="#collapse"/></svg></b><b><svg viewBox="0 0 20 20"><use href="#info" width="24" height="24"/></svg></b></div>
<div class="bwrap">
<div class="tree btree">
<div class="row d4"><i class="ar none"></i><svg><use href="#raster"/></svg><span>N08E080.hgt</span></div>
<div class="row d4"><i class="ar"></i><svg><use href="#zip"/></svg><span>N08E080.hgt.aux.xml</span></div>
<div class="row d3"><i class="ar down"></i><svg><use href="#zip"/></svg><span>N08E081.SRTMGL1.hgt.zip</span></div>
<div class="row d4"><i class="ar none"></i><svg><use href="#raster"/></svg><span>N08E081.hgt</span></div>
<div class="row d4"><i class="ar"></i><svg><use href="#zip"/></svg><span>N08E081.hgt.aux.xml</span></div>
<div class="row d3"><i class="ar down"></i><svg><use href="#zip"/></svg><span>N09E080.SRTMGL1.hgt.zip</span></div>
<div class="row d4 hl"><i class="ar none"></i><svg><use href="#raster"/></svg><span>N09E080.hgt</span></div>
<div class="row d4"><i class="ar none"></i><svg><use href="#zip"/></svg><span>N09E080.hgt.aux.xml</span></div>
<div class="row d3 tight"><i class="ar down"></i><svg><use href="#zip"/></svg><span>ne_10m_admin_0_countries.zip</span></div>
<div class="row d4 tight"><i class="ar none"></i><svg><use href="#vec"/></svg><span>ne_10m_admin_0_countries.dbf</span></div>
<div class="row d4 tight"><i class="ar none"></i><svg><use href="#vec"/></svg><span>ne_10m_admin_0_countries.shp</span></div>
<div class="row d2"><i class="ar"></i><svg><use href="#folder"/></svg><span>QGISProject</span></div>
<div class="row d2 tight"><i class="ar"></i><svg><use href="#folder"/></svg><span>新建文件夹</span></div>
<div class="row d1 wide"><i class="ar"></i><svg><use href="#folder"/></svg><span>C:\Users\Administrator\Desktop\temp</span></div>
</div>
<div class="vscroll"><i class="sb u"></i><i class="trough a"></i><i class="thumb"></i><i class="trough"></i><i class="sb d"></i></div>
</div>
</section>
</aside>
<div class="vgrip"></div>
<div class="map">
<svg viewBox="378 124 1284 879" width="1284" height="879">
<defs>
<filter id="veins" x="0" y="0" width="1" height="1"><feTurbulence type="fractalNoise" baseFrequency=".11 .06" numOctaves="4" seed="7"/><feColorMatrix values="0 0 0 0 0  0 0 0 0 0  0 0 0 0 0  3 0 0 0 -.950" result="n"/><feComposite in="SourceGraphic" in2="n" operator="in"/></filter>
<filter id="ridge" x="-.2" y="-.2" width="1.400" height="1.400"><feGaussianBlur in="SourceGraphic" stdDeviation="11" result="s"/><feTurbulence type="fractalNoise" baseFrequency=".07 .035" numOctaves="5" seed="4"/><feColorMatrix values="0 0 0 0 0  0 0 0 0 0  0 0 0 0 0  4.500 0 0 0 -1.700" result="n"/><feComposite in="s" in2="n" operator="in"/></filter>
<filter id="specks" x="0" y="0" width="1" height="1"><feGaussianBlur in="SourceGraphic" stdDeviation="6" result="s"/><feTurbulence type="fractalNoise" baseFrequency=".13 .07" numOctaves="3" seed="12"/><feColorMatrix values="0 0 0 0 0  0 0 0 0 0  0 0 0 0 0  9 0 0 0 -5.200" result="n"/><feComposite in="s" in2="n" operator="in"/></filter>
<filter id="soft" x="-.3" y="-.3" width="1.600" height="1.600"><feGaussianBlur stdDeviation="12"/></filter>
<clipPath id="north"><path d="M339 96h258v257H339z"/></clipPath>
<clipPath id="land9"><path d="M339 145l40 1 22-6 28 30 45 38 38 37 40 44 22 50 20 14H362l10-48-4-32 20-18-49-45z"/></clipPath>
<clipPath id="east"><path d="M597 375l30 28 25 44 5 30 25 8 15 50 24 74 36 50 35 60 10 78-20 90-60 90-80 80-50 20z"/></clipPath>
<clipPath id="west"><path d="M324 360l15 4V1005l-12-32-20-65-8-60-5-75-6-60-10-60-8-80 8-20 14 4 4-60 14-34 10-60z"/></clipPath>
<clipPath id="mid"><path d="M339 609h255v512H339z"/></clipPath>
<clipPath id="se"><path d="M594 609h258v512H594z"/></clipPath>
<clipPath id="centre"><path d="M339 353h255v256H339z"/></clipPath>
</defs>
<g transform="translate(540 110) scale(.33333)" fill="#7d8b8f" stroke="#232323" stroke-width="3">
<path d="M66 20V45L74 62 80 95 88 122 89 140 99 178 106 190 120 218 131 245 145 275 160 301 173 334 180 345 194 391 206 395 224 409 228 420 237 433 244 434 263 453 279 473 291 498 302 531 317 535 325 549 332 563 346 592 358 623 366 650 374 690 381 702 383 714 397 745 410 770 420 800 431 818 436 845 446 861 446 878 459 908 466 935 474 970 476 1020 486 1060 498 1092 515 1122 525 1148 534 1172 540 1188 566 1212 597 1252 625 1286 654 1322 690 1352 711 1371 739 1388 770 1395 798 1400 800 1388 819 1380 851 1373 869 1357 899 1340 927 1323 934 1305 943 1293 946 1267 943 1253 952 1230 956 1217 957 1190 967 1175 990 1155 1026 1134 1075 1127 1081 1118 1100 1116 1112 1109 1137 1101 1160 1093 1190 1098 1212 1095 1244 1101 1278 1125 1280 1120 1252 1098 1252 1082 1244 1082 1236 1089 1182 1087 1166 1077 1145 1055 1145 1044 1149 1018 1158 1000 1165 986 1189 960 1203 936 1221 914 1236 901 1228 887 1227 863 1235 857 1238 846 1251 836 1266 826 1299 829 1318 825 1365 833 1384 836 1387 828 1384 760 1381 690 1384 610 1380 580 1375 550 1367 541 1359 515 1359 495 1367 452 1375 430 1386 400 1387 391 1417 344 1447 304 1464 268 1470 241 1480 220 1486 180 1490 145 1500 112 1502 88 1508 60 1508 20z"/>
<g fill="#fff" stroke-width="2.200"><path d="M99 180l11-1 20-4-14 9-11 4zM212 399l10-9 5 4-7 8zM224 412l10-2 10-6 3 13-20-1zM453 840l9 13-7 8-7-3zM456 876l7 2 6 20 5 18 12 4 10 14 5 14-2 38 8 30 20 8-4 12-30-4 1-14 6-18-6-26 0-30-12-4-12 0-6-14-4-14zM506 1100l11 14 4 17-10-15zM540 1176l14-12 15-3-4 8-15 4 6 10-13 4zM1340 577l20-19 14-1-1 6-14 2zM1310 823l50 5 3 7-50-6zM1407 344l13-9-3 8z"/></g>
<path d="M486 945l5 5-2 30-4-6zM955 1222l10-1-8 9zM1384 970l11 6 4 18 14 10-21 1-11-14zM1399 965l20-15v41l-14-4zM1333 1025l10 2 9 8-7 7-12-8zM1345 1138l19-1 24 12 11 11-11 0-18-15-24-2zM1302 822l16 6-8 4z"/>
</g>
<g transform="translate(900 380) scale(.33333)">
<path d="M339 96h258v257H339z" fill="#0e0e0e"/><path d="M84 351h255v258H84z" fill="#080808"/><path d="M339 353h256v257H339z" fill="#151515"/><path d="M594 351h258v258H594z" fill="#090909"/><path d="M84 609h255v258H84z" fill="#0f0f0f"/><path d="M339 609h513v512H339z" fill="#020202"/><path d="M84 867h255v254H84z" fill="#292929"/><path d="M339 1120h258v257H339z" fill="#000"/>
<path d="M339 143h20l10 20-12 20-18-1z" fill="#3c4446"/>
<g clip-path="url(#north)"><g clip-path="url(#land9)"><path d="M339 96h258v257H339z" fill="#1c1c1c" opacity=".6"/><path d="M339 96h258v257H339z" fill="#333" filter="url(#veins)"/><ellipse cx="465" cy="322" rx="88" ry="58" fill="#747474" filter="url(#soft)"/><ellipse cx="465" cy="315" rx="95" ry="65" fill="#aaa" filter="url(#ridge)"/><ellipse cx="478" cy="345" rx="60" ry="25" fill="#ccc" opacity=".75" filter="url(#soft)"/></g></g>
<g clip-path="url(#centre)"><path d="M339 353h255v256H339z" fill="#252525" filter="url(#veins)"/><ellipse cx="480" cy="570" rx="100" ry="60" fill="#333" opacity=".6" filter="url(#soft)"/><path d="M500 410h94v199h-94z" fill="#555" opacity=".45" filter="url(#specks)"/></g><path d="M507 573h3v9h-3z" fill="#fff"/>
<g clip-path="url(#east)"><path d="M594 351h140v258H594z" fill="#1c1c1c"/><path d="M594 351h140v258H594z" fill="#3a3a3a" filter="url(#veins)"/><path d="M585 425h70l-60 90z" fill="#999" filter="url(#ridge)"/><path d="M588 425h70l-62 85z" fill="#eee" filter="url(#specks)"/><path d="M630 609h190v340H630z" fill="#444" opacity=".5" filter="url(#specks)"/><ellipse cx="715" cy="770" rx="60" ry="70" fill="#ccc" filter="url(#specks)"/></g>
<g clip-path="url(#west)"><path d="M260 351h79v660h-79z" fill="#1a1a1a"/><path d="M298 470h41v540h-41z" fill="#3c3c3c"/><path d="M298 440h41v570h-41z" fill="#8c8c8c" filter="url(#veins)"/><ellipse cx="330" cy="505" rx="14" ry="30" fill="#ccc" filter="url(#ridge)"/><ellipse cx="318" cy="560" rx="22" ry="25" fill="#ccc" filter="url(#soft)"/><path d="M298 480h60v160h-60zM298 867h60v150h-60z" fill="#ddd" filter="url(#specks)"/></g>
<g clip-path="url(#mid)">
<path d="M430 615h150v130H430zM350 850h90v250h-90z" fill="#444" opacity=".6" filter="url(#specks)"/>
<path d="M495 680l35 40 40 50 24 50v120l-50 0-60-15-40-30 20-90z" fill="#3c3c3c" opacity=".75" filter="url(#soft)"/>
<path d="M490 690l40 10 50 70 9 130-60 40-80-30-20-40 45-60z" fill="#888" filter="url(#ridge)"/>
<path d="M522 710l20 30 35 25 2 28-30-10-25-35z" fill="#ddd" filter="url(#ridge)"/>
<path d="M455 885l30-12 30-55 30 35 49 15v48l-60 10-50-5z" fill="#a5a5a5" opacity=".85" filter="url(#soft)"/>
<path d="M445 870l40-22 30-25 79 45v50l-80 10-50-20z" fill="#eee" filter="url(#ridge)"/>
<ellipse cx="545" cy="895" rx="16" ry="26" fill="#e4e4e4" opacity=".8" filter="url(#soft)"/>
<path d="M470 925h100l-10 42h-40z" fill="#333" opacity=".8"/><path d="M470 925h100l-10 42h-40z" fill="#555" filter="url(#veins)"/>
<path d="M380 930q20 60 70 90l25 60q40-10 45-60l-50-40q-40-10-50-60z" fill="#777" filter="url(#ridge)"/>
<path d="M435 980q40 40 90 45l-20-33q-30 0-50-30z" fill="#ccc" filter="url(#ridge)"/>
</g>
<g clip-path="url(#se)"><path d="M590 860l20-50h20l24 40-14 35-30 30-20 10z" fill="#888" opacity=".6" filter="url(#soft)"/><path d="M585 860l25-55h20l30 45-20 40-30 40-25-5z" fill="#fff" filter="url(#ridge)"/></g>
<path d="M427 1123h103l-30 13-40-4z" fill="#999" filter="url(#veins)"/><path d="M485 1124h42l-30 8z" fill="#eee" filter="url(#veins)"/>
</g>
<g transform="translate(370 620) scale(.33333)" fill="none" stroke="#333" stroke-width="6" stroke-linecap="square">
<path stroke-width="4" d="M122 121h1M140 138h1M195 153h1M198 166v3M135 180l4 2M143 184h1M171 171h1M169 181h1M181 184h1M193 187h1M124 205h1M154 206h1M185 201l-4 10M171 218h1M162 229h1M155 241h1M152 251h1M126 256h1M135 257h1M65 294h1M118 285l2 2M157 286h1M133 310h1M151 306h1M193 310l2 6M199 324h1M207 339h1M213 351v8M123 404l4 4M245 408h1M253 422h1M257 440h1M242 453h1M244 468h1M136 435h1M138 447h1M145 473h1M148 482h1M149 497h1M115 529h1M130 535h1M147 530v6M228 560v1M247 562h1M306 551v2M293 583h1M157 621h1M171 611h1M257 661h1M138 682h1M248 748h1M286 752h1M240 789h1M131 799h5M132 842h7M274 884h1M266 925h1M256 949h1M69 909h1M67 980h1M131 952h1M131 967h1M133 978h1M130 1007h1M125 1024h1M92 1033h1M102 1035h1M103 1085h1M153 1101h1M156 1112h1M139 1137h1M121 1144h1M337 1050h1M277 1073h1M301 1138h1M307 815h1M315 810h1M297 821h1"/>
<path stroke="#999" stroke-width="3" d="M116 117h1M131 130h1M117 147h1M126 155h1M154 342h1M167 320h1M177 325h1M176 315h1M200 355v12M209 371v7M142 458h1M262 516h1M238 536h1M234 545h1M281 539h1M265 575h1M271 591h1M305 569l5-2M133 564h1M109 594h1M172 579h1M178 592h1M122 646h5M124 681h1M270 726h1M253 879h1M233 924h1M257 930h1M274 1036h1M323 796h2"/>
<path d="M255 861l25-1 4-12 4 2-3 12-10 6h-8z" fill="#3c4446" stroke-width="1"/>
</g>
<g transform="translate(375 250) scale(.33333)" fill="none" stroke="#2b2b2b" stroke-width="4"><path d="M53 58l6-1M129 108l5-1M75 168l-4 16M63 204h5M12 290h4M35 347l6-5M300 277h6M296 452h4M291 468h6M136 929q12 8 14-10" stroke-width="5"/></g>
</svg>
</div>
<div class="vgrip right"></div>
<aside class="proc">
<div class="ptitle"><span>Processing Toolbox</span><svg><use href="#float"/></svg><svg><use href="#close"/></svg></div>
<div class="ptools"><b class="sub"><svg><use href="#models"/></svg></b><b class="sub"><svg><use href="#py"/></svg></b><b><svg><use href="#clocks"/></svg></b><b><svg><use href="#doc"/></svg></b><i class="sep"></i><b class="off"><svg><use href="#editp"/></svg></b><i class="sep"></i><b><svg><use href="#wrench"/></svg></b></div>
<div class="find"><svg><use href="#search"/></svg><span>Search<em>⋯</em></span></div>
<div class="tree ptree">
<div class="row"><i class="ar"></i><svg><use href="#clocks"/></svg><span>Recently used</span></div>
<div class="row"><i class="ar"></i><svg><use href="#qgis"/></svg><span>Cartography</span></div>
<div class="row"><i class="ar"></i><svg><use href="#qgis"/></svg><span>Database</span></div>
<div class="row"><i class="ar"></i><svg><use href="#qgis"/></svg><span>File tools</span></div>
<div class="row"><i class="ar"></i><svg><use href="#qgis"/></svg><span>GPS</span></div>
<div class="row"><i class="ar"></i><svg><use href="#qgis"/></svg><span>Interpolation</span></div>
<div class="row"><i class="ar"></i><svg><use href="#qgis"/></svg><span>Layer tools</span></div>
<div class="row"><i class="ar"></i><svg><use href="#qgis"/></svg><span>Mesh</span></div>
<div class="row"><i class="ar"></i><svg><use href="#qgis"/></svg><span>Network analysis</span></div>
<div class="row"><i class="ar"></i><svg><use href="#qgis"/></svg><span>Plots</span></div>
<div class="row"><i class="ar"></i><svg><use href="#qgis"/></svg><span>Raster analysis</span></div>
<div class="row"><i class="ar"></i><svg><use href="#qgis"/></svg><span>Raster creation</span></div>
<div class="row"><i class="ar"></i><svg><use href="#qgis"/></svg><span>Raster terrain analysis</span></div>
<div class="row"><i class="ar"></i><svg><use href="#qgis"/></svg><span>Raster tools</span></div>
<div class="row"><i class="ar"></i><svg><use href="#qgis"/></svg><span>Vector analysis</span></div>
<div class="row"><i class="ar"></i><svg><use href="#qgis"/></svg><span>Vector creation</span></div>
<div class="row"><i class="ar"></i><svg><use href="#qgis"/></svg><span>Vector general</span></div>
<div class="row"><i class="ar"></i><svg><use href="#qgis"/></svg><span>Vector geometry</span></div>
<div class="row"><i class="ar"></i><svg><use href="#qgis"/></svg><span>Vector overlay</span></div>
<div class="row"><i class="ar"></i><svg><use href="#qgis"/></svg><span>Vector selection</span></div>
<div class="row"><i class="ar"></i><svg><use href="#qgis"/></svg><span>Vector table</span></div>
<div class="row"><i class="ar"></i><svg><use href="#qgis"/></svg><span>Vector tiles</span></div>
<div class="row"><i class="ar down"></i><svg><use href="#gdal"/></svg><span>GDAL</span></div>
<div class="row grp"><i class="ar"></i><span>Raster analysis</span></div>
<div class="row grp"><i class="ar"></i><span>Raster conversion</span></div>
<div class="row grp"><i class="ar"></i><span>Raster extraction</span></div>
<div class="row grp"><i class="ar down"></i><span>Raster miscellaneous</span></div>
<div class="row alg"><svg><use href="#pyr"/></svg><span>Build overviews (pyramids)</span></div>
<div class="row alg"><svg><use href="#vrt"/></svg><span>Build virtual raster</span></div>
<div class="row alg"><svg><use href="#gdal"/></svg><span>gdal2tiles</span></div>
<div class="row alg hl"><svg><use href="#merge"/></svg><span>Merge</span></div>
<div class="row alg"><svg><use href="#gdal"/></svg><span>Pansharpening</span></div>
<div class="row alg"><svg><use href="#gdal"/></svg><span>Raster calculator</span></div>
<div class="row alg"><svg><use href="#rinfo"/></svg><span>Raster information</span></div>
<div class="row alg"><svg><use href="#gdal"/></svg><span>Retile</span></div>
<div class="row alg"><svg><use href="#tidx"/></svg><span>Tile index</span></div>
<div class="row alg"><svg><use href="#gdal"/></svg><span>Viewshed</span></div>
<div class="row grp"><i class="ar"></i><span>Raster projections</span></div>
<div class="row grp"><i class="ar"></i><span>Vector conversion</span></div>
<div class="row grp"><i class="ar"></i><span>Vector geoprocessing</span></div>
<div class="row grp"><i class="ar"></i><span>Vector miscellaneous</span></div>
</div>
</aside>
</main>

<footer class="status">
<div class="locate"><svg><use href="#search"/></svg><span>Type to locate (Ctrl+K)</span></div>
<div class="stat">
<span>Coordinate</span><span class="box coord">10.19,72.69</span><svg class="ext"><use href="#extent"/></svg>
<span>Scale</span><span class="box scale">1:4466958<i class="cb"></i></span><svg class="lk"><use href="#lock"/></svg>
<span>Magnifier</span><span class="box mg">100%<i class="spin"></i></span>
<span class="rl">Rotation</span><span class="box rot">0.0 °<i class="spin"></i></span>
<i class="ck"></i><span class="rn">Render</span><svg class="gl"><use href="#globe"/></svg><span>EPSG:4326</span><svg class="ms"><use href="#msg"/></svg>
</div>
</footer>
</div>
</body>
</html>
```
FILE: styles.css
```
* { box-sizing: border-box; }
body { margin: 0; background: #efefef; color: #000; font: 12px/19px "Open Sans", "Noto Sans CJK SC", sans-serif; overflow: hidden; }
i, em { font-style: normal; }
b { font-weight: 400; }
.defs { position: absolute; width: 0; height: 0; }
.app { width: 1917px; height: 1030px; display: flex; flex-direction: column; }

.title { height: 23px; flex: none; display: flex; align-items: center; background: linear-gradient(90deg, #f0f2f3, #f3f1f2 420px, #faefed 700px, #faefee 1000px, #eef2f8 1500px, #eef2f8); letter-spacing: -.38px; }
.title > svg { width: 16px; height: 16px; }
.title > span { margin-left: 6px; }
.win { margin-left: auto; display: flex; gap: 33.500px; padding-right: 18px; }
.win svg { width: 12px; height: 12px; fill: none; stroke: #222; stroke-width: 1; margin-top: -3px; }

.menu { height: 22px; flex: none; display: grid; grid-template-columns: 54px 36px 41px 45px 60px 55.500px 51.500px 51px 46px 77px auto; padding-left: 8px; line-height: 21px; border-bottom: 1px solid #d2d2d2; letter-spacing: .12px; }
u { text-underline-offset: 2px; }

.bar { height: 39px; flex: none; display: flex; align-items: center; background: linear-gradient(#fbfbfb, #efefef); border-bottom: 1px solid #b4b4b4; }
.bar b { width: 33px; height: 31px; flex: none; display: flex; align-items: center; justify-content: center; position: relative; }
.bar b svg { width: 24px; height: 24px; }
.bar b.off svg, .ptools b.off svg { opacity: .42; }
.bar b.on { background: #dcdcdc; border: 1px solid #aaa; border-radius: 2px; width: 31px; margin: 0 1px; }
.h { width: 16px; height: 18px; flex: none; background: radial-gradient(circle, #aaa .7px, transparent .9px) 8px 0 / 3px 3px repeat-y, radial-gradient(circle, #aaa .7px, transparent .9px) 11px 1px / 3px 3px repeat-y; }
.h.first { width: 10.500px; background-position: 2px 0, 5px 1px; }
.dd { width: 12px; flex: none; display: flex; justify-content: center; }
.dd::before, .sub::after { content: ""; border: 3.500px solid transparent; border-top: 4px solid #555; border-bottom: 0; }
.dd::before { margin-left: -2px; }
.dd.off::before, .off.sub::after { border-top-color: #aaa; }
.sub { position: relative; }
.sub::after { position: absolute; right: 2px; bottom: 0; border-width: 3px 3px 0; }
.sep { width: 7px; height: 20px; flex: none; background: linear-gradient(#ccc, #ccc) 3px 0 / 1px 100% no-repeat; }

.work { flex: none; height: 881px; display: flex; }
.left { width: 371px; flex: none; display: flex; flex-direction: column; }
.ptitle { height: 19px; display: flex; align-items: center; padding: 0 1px 0 2px; letter-spacing: .2px; flex: none; }
.ptitle span { margin-right: auto; padding-bottom: 1px; }
.ptitle svg { width: 12px; height: 12px; margin-left: 2px; }
.ptools { height: 31px; display: flex; align-items: center; padding: 0 0 3px 1px; flex: none; }
.ptools b { width: 25px; height: 20px; display: flex; align-items: center; justify-content: center; }
.ptools svg { width: 16px; height: 16px; }
.ptools .sub::after { right: 1px; bottom: 0; border-width: 3px 3px 0; }
.tree { background: #fff; border-top: 1px solid #b4b4b4; border-right: 1px solid #b4b4b4; overflow: hidden; }
.row { height: 19px; display: flex; align-items: center; white-space: nowrap; }
.row span, .row strong { padding-bottom: 1px; }
.row svg { width: 15px; height: 15px; flex: none; }
.ar { width: 14px; flex: none; display: flex; justify-content: center; }
.ar::before { content: ""; border: 4px solid transparent; border-left: 4px solid #555; border-right: 0; }
.ar.down::before { border: 4px solid transparent; border-top: 4px solid #555; border-bottom: 0; }
.ar.none::before { display: none; }
.ck { width: 14px; height: 14px; flex: none; border: 1px solid #b0b0b0; background: #fff; display: flex; justify-content: center; }
.ck::before { content: ""; width: 4px; height: 8px; margin-top: 1px; border: solid #000; border-width: 0 2px 2px 0; transform: rotate(38deg) skewY(12deg); }

.layers { height: 556px; flex: none; display: flex; flex-direction: column; }
.ltree { flex: 1; }
.ltree .row { padding-left: 2px; }
.ltree .ck { margin: 0 8px 0 6px; }
.ltree .row svg { width: 13px; height: 13px; }
.ltree .row strong { margin-left: 5.500px; padding-left: 2px; flex: 1; min-width: 0; letter-spacing: .16px; }
.ltree .swatch { width: 16px; height: 16px; flex: none; margin-left: -2px; background: #7d8b8f; border: 1px solid #555; }
.ltree .row .swatch + strong { margin-left: 4px; letter-spacing: .06px; }
.ltree .row .cur { height: 19px; line-height: 16px; background: linear-gradient(#f7fbfe, #e8f3fb); border: 1px solid #b8d8ee; border-right: 0; padding-left: 1px; }
.legend { height: 115px; padding-left: 42px; }
.legend > span { display: block; height: 18px; line-height: 17px; letter-spacing: .3px; }
.ramp { display: flex; height: 96px; }
.ramp i { width: 16px; background: linear-gradient(#fff, #000); }
.ramp div { display: flex; flex-direction: column; justify-content: space-between; margin-left: 5px; font-size: 10.500px; line-height: 12px; }
.hscroll { height: 15px; display: flex; border: 1px solid #b4b4b4; border-left: 0; flex: none; }
.sb { width: 13px; flex: none; background: #fafafa; display: flex; align-items: center; justify-content: center; }
.sb::before { content: ""; border: 4px solid transparent; }
.l::before { border-right: 5px solid #555; border-left: 0; }
.r::before { border-left: 5px solid #555; border-right: 0; }
.u::before { border-bottom: 4px solid #555; border-top: 0; }
.d::before { border-top: 4px solid #555; border-bottom: 0; }
.hscroll .thumb { width: 289px; background: linear-gradient(#fdfdfd, #f2f2f2); border: solid #b4b4b4; border-width: 0 1px; }
.trough { flex: 1; background: #e4e4e4; }
.hscroll .r { border-left: 1px solid #b4b4b4; }
.hgrip { height: 6px; flex: none; background: radial-gradient(circle, #aaa .7px, transparent .9px) 0 0 / 3px 3px repeat-x content-box; padding: 1px 176px 2px 178px; }

.browser { flex: 1; min-height: 0; display: flex; flex-direction: column; }
.browser .ptitle { height: 21px; }
.browser .ptools { height: 29.500px; padding-bottom: 2px; }
.bwrap { flex: 1; display: flex; min-height: 0; border-bottom: 1px solid #b4b4b4; }
.btree { flex: 1; border-right: 0; letter-spacing: .2px; }
.btree .row { margin-right: 10px; }
.btree .row.tight { letter-spacing: 0; }
.btree .row.wide { letter-spacing: .25px; }
.btree .row svg { width: 14px; height: 14px; }
.btree .row span { margin-left: 7px; }
.btree .ar { margin-right: 5px; }
.d1 { padding-left: 16px; }
.d2 { padding-left: 32px; }
.d3 { padding-left: 48px; }
.d4 { padding-left: 64px; }
.hl { background: #efefef; }
.vscroll { width: 15px; flex: none; display: flex; flex-direction: column; border: 1px solid #b4b4b4; border-bottom: 0; }
.vscroll .sb { height: 13.500px; }
.vscroll .trough.a { flex: none; height: 102px; border-top: 1px solid #b4b4b4; }
.vscroll .thumb { height: 51px; flex: none; background: linear-gradient(90deg, #fdfdfd, #f2f2f2); border: solid #b4b4b4; border-width: 1px 0; }
.vscroll .d { border-top: 1px solid #b4b4b4; }

.vgrip { width: 6px; flex: none; background: radial-gradient(circle, #aaa .7px, transparent .9px) 2px 0 / 3px 3px repeat-y content-box; padding: 434px 0 431px; }
.map { width: 1286px; flex: none; border: 1px solid #b4b4b4; overflow: hidden; background: #fff; }
.map svg { display: block; }

.proc { flex: 1; min-width: 0; display: flex; flex-direction: column; }
.proc .ptitle { padding-left: 4px; padding-right: 0; letter-spacing: .4px; }
.proc .ptools { padding-left: 3px; }
.proc .ptools svg { width: 17px; height: 17px; }
.proc .ptools .sep { width: 8px; height: 12px; }
.find { height: 22px; flex: none; margin-right: -3px; border: 1px solid #aaa; border-radius: 2px; background: #fff; display: flex; align-items: center; padding-left: 8px; color: #707070; font-family: "Liberation Mono", monospace; font-size: 10px; }
.find em { font-size: 14px; line-height: 10px; }
.find svg, .locate svg { width: 13px; height: 13px; margin-right: 7px; }
.ptree { flex: 1; border: 1px solid #b4b4b4; border-right: 0; letter-spacing: .18px; }
.ptree .row { padding-left: 3px; }
.ptree .row svg { margin: 0 6.500px 0 7px; }
.ptree .grp { height: 17px; padding-left: 23px; line-height: 17px; }
.ptree .grp .ar { margin-right: 6px; }
.ptree .alg { padding-left: 63px; }
.ptree .alg svg { width: 16px; height: 16px; margin: 0 6.500px 0 0; }

.status { flex: 1; display: flex; align-items: center; font-family: "Liberation Mono", monospace; font-size: 10px; white-space: nowrap; }
.locate { width: 244px; height: 22px; margin-left: 2px; border: 1px solid #aaa; border-radius: 3px; background: #fff; display: flex; align-items: center; padding-left: 8px; color: #707070; }
.stat { margin-left: 845px; display: flex; align-items: center; }
.box { height: 21px; border: 1px solid #aaa; border-radius: 3px; background: #fff; display: flex; align-items: center; padding-left: 4px; }
.coord { width: 80px; margin-left: 3px; padding-left: 6px; }
.ext { width: 15px; height: 15px; margin: 0 14px 0 5px; }
.scale { width: 82px; margin-left: 3px; }
.cb { margin-left: auto; width: 21px; height: 19px; border-left: 1px solid #aaa; display: flex; align-items: center; justify-content: center; background: linear-gradient(#fdfdfd, #f2f2f2); }
.cb::before { content: ""; border: 4px solid transparent; border-top: 5px solid #555; border-bottom: 0; }
.lk { width: 16px; height: 17px; margin: 0 6px 0 11px; }
.mg { width: 88px; margin-left: 4px; }
.spin { margin-left: auto; width: 13px; height: 19px; border-left: 1px solid #aaa; display: flex; flex-direction: column; align-items: center; justify-content: center; gap: 4px; background: linear-gradient(#fdfdfd, #f2f2f2); }
.spin::before, .spin::after { content: ""; border: 3.500px solid transparent; }
.spin::before { border-bottom: 4px solid #555; border-top: 0; }
.spin::after { border-top: 4px solid #555; border-bottom: 0; }
.rl { margin-left: 10px; }
.rot { width: 88px; margin: 0 7px 0 9px; }
.rn { margin-left: 5px; }
.gl { width: 15px; height: 15px; margin: 0 3px 0 15px; }
.ms { width: 16px; height: 16px; margin-left: 29px; }
```
